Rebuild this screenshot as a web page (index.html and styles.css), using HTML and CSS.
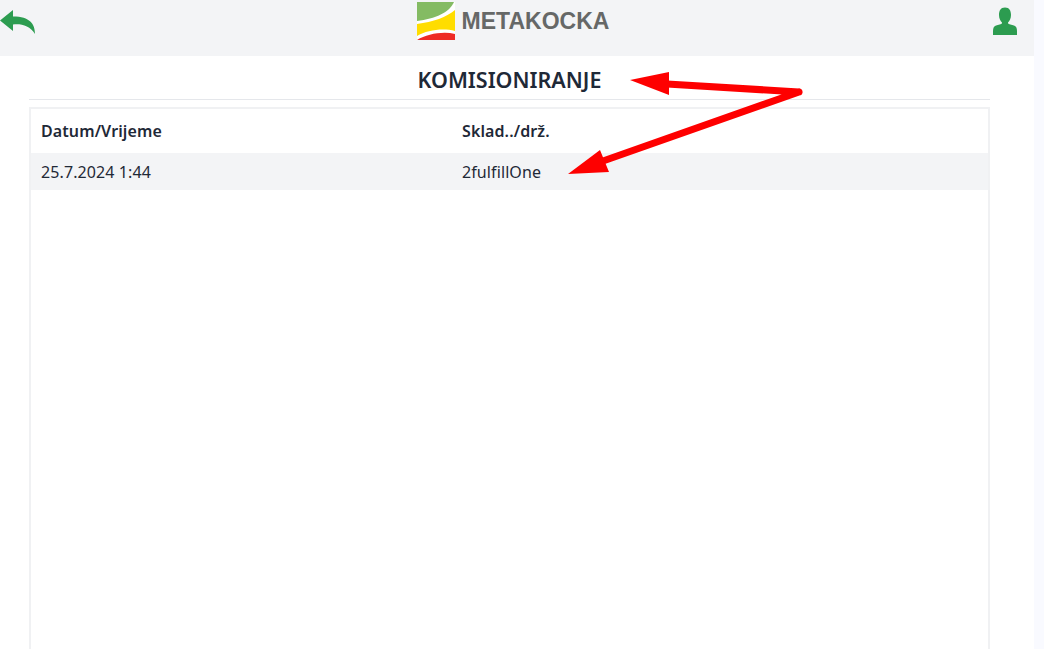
FILE: index.html
```html
<!DOCTYPE html>
<html lang="hr">
<head>
<meta charset="utf-8">
<title>Komisioniranje</title>
<link rel="stylesheet" href="styles.css">
</head>
<body>
<div class="page">
  <header class="topbar">
    <svg class="back" viewBox="0 0 36 24" aria-hidden="true"><path d="M13 0 L0 10.500 L13 21 L13 14.500 C21 13.500 30 15.500 35 24 C35 14 30 6.500 13 6.500 Z"/></svg>
    <div class="brand">
      <svg class="logo" viewBox="0 0 38 38" aria-hidden="true">
        <rect width="38" height="38" fill="#fff"/>
        <path d="M0 0H37C33 10 18 17 0 19Z" fill="#84bb63"/>
        <path d="M0 22C16 20 30 15 38 8V29C26 26 10 28 0 34Z" fill="#ffdd00"/>
        <path d="M0 38C10 32 26 29 38 32V38Z" fill="#ee2b24"/>
      </svg>
      <span class="wordmark">METAKOCKA</span>
    </div>
    <svg class="user" viewBox="0 0 24 28" aria-hidden="true"><path d="M12 0.500C7.500 0.500 6 4 6 8C6 11.500 7.500 14 9 15.500C9 16.500 8.500 17 7.500 17.300L3 18.500C1 19 0 21 0 24V28H24V24C24 21 23 19 21 18.500L16.500 17.300C15.500 17 15 16.500 15 15.500C16.500 14 18 11.500 18 8C18 4 16.500 0.500 12 0.500Z"/></svg>
  </header>
  <main class="content">
    <h1 class="title">KOMISIONIRANJE</h1>
    <section class="table">
      <div class="row heading"><span class="col-a">Datum/Vrijeme</span><span>Sklad../drž.</span></div>
      <div class="row item"><span class="col-a">25.7.2024 1:44</span><span>2fulfillOne</span></div>
    </section>
  </main>
</div>
<svg class="arrows" viewBox="0 0 1044 649" aria-hidden="true">
  <path d="M799 92 L667 84 M799 92 L603 161" class="shaft"/>
  <path d="M630 80 L669 72 L669 95 Z M568 174 L600 150 L609 172 Z" class="tip"/>
</svg>
</body>
</html>
```
FILE: styles.css
```css
* { box-sizing: border-box; }
html, body { margin: 0; height: 100%; overflow: hidden; }
body {
  background: #f9faff;
  font-family: "Noto Sans", "Open Sans", sans-serif;
  color: #1f2937;
  font-size: 16px;
}
.page {
  width: 1034px;
  height: 649px;
  background: #fff;
  display: flex;
  flex-direction: column;
}
.topbar {
  height: 56px;
  flex: none;
  background: #f3f4f6;
  display: flex;
  justify-content: space-between;
  align-items: flex-start;
  padding: 0 17px 0 0;
}
.back { width: 36px; height: 24px; margin-top: 10px; fill: #2c9c50; }
.user { width: 24px; height: 28px; margin-top: 7px; fill: #2c9c50; }
.brand {
  display: flex;
  align-items: center;
  gap: 7px;
  margin-top: 2px;
  margin-left: -3px;
}
.logo { width: 38px; height: 38px; display: block; }
.wordmark {
  font-family: "Liberation Sans", Arial, sans-serif;
  font-weight: 700;
  font-size: 23px;
  color: #666867;
}
.content { padding: 0 44px 0 29px; flex: 1; display: flex; flex-direction: column; }
.title {
  margin: 0;
  height: 44px;
  line-height: 48px;
  font-size: 21.5px;
  font-weight: 600;
  text-align: center;
  color: #1f2937;
  border-bottom: 1px solid #e5e7eb;
}
.table {
  margin-top: 7px;
  flex: 1;
  border: 2px solid #f0f1f3;
  border-bottom: 0;
}
.row { display: flex; align-items: center; padding-left: 10px; letter-spacing: 0.1px; }
.col-a { width: 421px; }
.heading { height: 44px; font-weight: 600; }
.item { height: 37px; background: #f3f4f6; }
.arrows { position: absolute; left: 0; top: 0; width: 1044px; height: 649px; pointer-events: none; }
.shaft { fill: none; stroke: #fe0000; stroke-width: 7; stroke-linecap: round; stroke-linejoin: round; }
.tip { fill: #fe0000; }
```
